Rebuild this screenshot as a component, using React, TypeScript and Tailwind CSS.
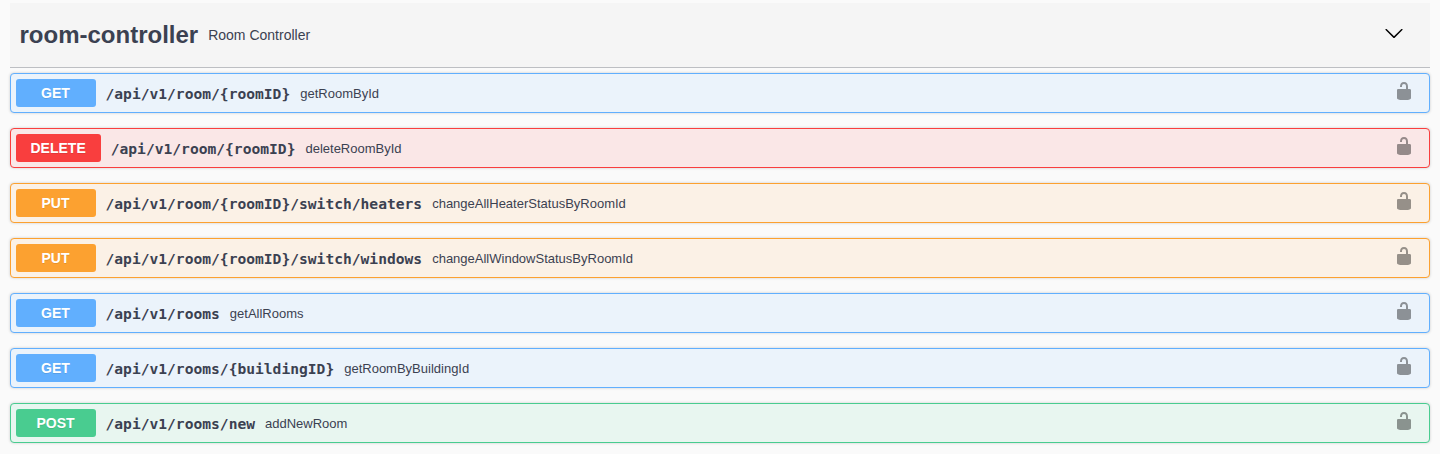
type Method = "GET" | "DELETE" | "PUT" | "POST";

interface Operation {
  method: Method;
  path: string;
  summary: string;
}

const operations: Operation[] = [
  { method: "GET", path: "/api/v1/room/{roomID}", summary: "getRoomById" },
  { method: "DELETE", path: "/api/v1/room/{roomID}", summary: "deleteRoomById" },
  { method: "PUT", path: "/api/v1/room/{roomID}/switch/heaters", summary: "changeAllHeaterStatusByRoomId" },
  { method: "PUT", path: "/api/v1/room/{roomID}/switch/windows", summary: "changeAllWindowStatusByRoomId" },
  { method: "GET", path: "/api/v1/rooms", summary: "getAllRooms" },
  { method: "GET", path: "/api/v1/rooms/{buildingID}", summary: "getRoomByBuildingId" },
  { method: "POST", path: "/api/v1/rooms/new", summary: "addNewRoom" },
];

const rowStyles: Record<Method, string> = {
  GET: "border-[#61affe] bg-[#ebf3fb]",
  DELETE: "border-[#f93e3e] bg-[#fae7e7]",
  PUT: "border-[#fca130] bg-[#fbf1e6]",
  POST: "border-[#49cc90] bg-[#e8f6f0]",
};

const badgeStyles: Record<Method, string> = {
  GET: "bg-[#61affe]",
  DELETE: "bg-[#f93e3e]",
  PUT: "bg-[#fca130]",
  POST: "bg-[#49cc90]",
};

function ChevronIcon() {
  return (
    <svg width="20" height="20" viewBox="0 0 20 20">
      <path d="M17.418 6.109c.272-.268.709-.268.979 0s.271.701 0 .969l-7.908 7.83c-.27.268-.707.268-.979 0l-7.908-7.83c-.27-.268-.27-.701 0-.969.271-.268.709-.268.979 0L10 13.25l7.418-7.141z" />
    </svg>
  );
}

function UnlockedIcon() {
  return (
    <svg width="20" height="20" viewBox="0 0 20 20" className="opacity-40">
      <path d="M15.8 8H14V5.6C14 2.703 12.665 1 10 1 7.334 1 6 2.703 6 5.6V6h2v-.801C8 3.754 8.797 3 10 3c1.203 0 2 .754 2 2.199V8H4c-.553 0-1 .646-1 1.199V17c0 .549.428 1.139.951 1.307l1.197.387C5.672 18.861 6.55 19 7.1 19h5.8c.549 0 1.428-.139 1.951-.307l1.196-.387c.524-.167.953-.757.953-1.306V9.199C17 8.646 16.352 8 15.8 8z" />
    </svg>
  );
}

function OperationRow({ method, path, summary }: Operation) {
  return (
    <div className={`flex h-10 items-center rounded border p-[5px] shadow-[0_0_3px_rgba(0,0,0,0.19)] ${rowStyles[method]}`}>
      <span
        className={`flex h-7 min-w-20 items-center justify-center rounded-[3px] pr-[15.5px] pl-[14.5px] text-sm font-bold text-white [text-shadow:0_1px_0_rgba(0,0,0,0.1)] ${badgeStyles[method]}`}
      >
        {method}
      </span>
      <span className="pt-0.5 pr-2.5 pl-[9.5px] font-['DejaVu_Sans_Mono',monospace] text-[14.615px] leading-5 font-bold">{path}</span>
      <span className="grow pt-0.5 text-[13px] leading-5">{summary}</span>
      <button type="button" aria-label="Authorize" className="mr-2.5 mb-1">
        <UnlockedIcon />
      </button>
    </div>
  );
}

export default function App() {
  return (
    <main className="h-[454px] overflow-hidden bg-[#fafafa] px-2.5 pt-[3px] font-['Liberation_Sans',Arial,sans-serif] text-[#3b4151]">
      <header className="mb-[5px] flex h-[65px] items-center border-b border-[#3b4151]/30 bg-[#f5f5f5] pr-[26px] pl-[9.5px]">
        <h3 className="text-2xl font-bold">room-controller</h3>
        <small className="grow px-2.5 text-sm">Room Controller</small>
        <button type="button" aria-label="Collapse" className="mb-1">
          <ChevronIcon />
        </button>
      </header>
      <section className="flex flex-col gap-[15px]">
        {operations.map((op) => (
          <OperationRow key={op.method + op.path} {...op} />
        ))}
      </section>
    </main>
  );
}
